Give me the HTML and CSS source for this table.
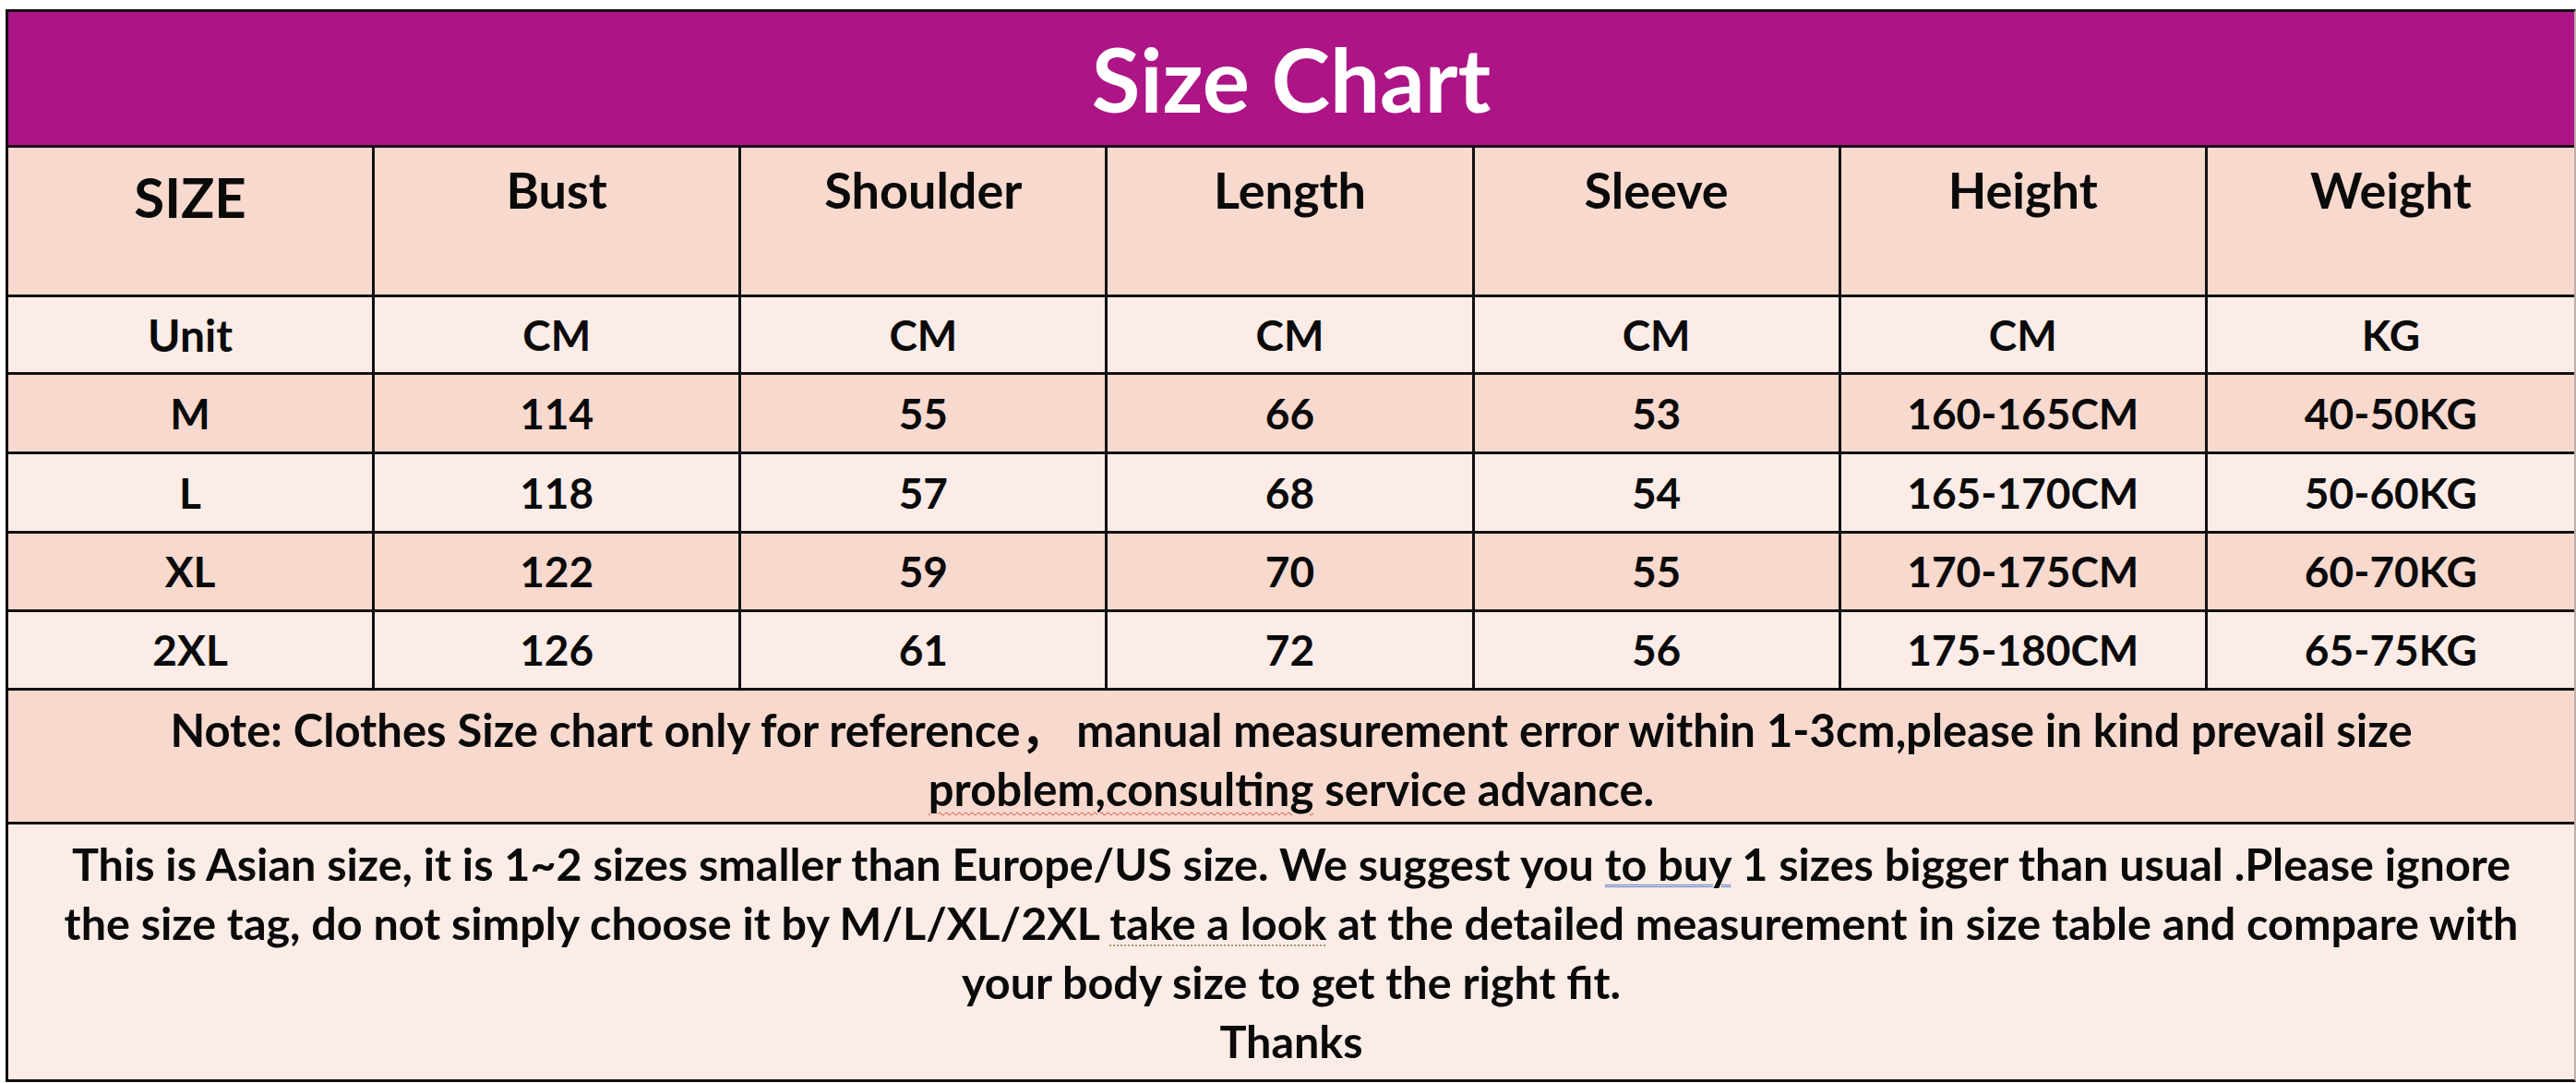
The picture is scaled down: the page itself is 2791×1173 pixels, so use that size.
FILE: index.html
```html
<!DOCTYPE html>
<html lang="en">
<head>
<meta charset="utf-8">
<title>Size Chart</title>
<link rel="stylesheet" href="styles.css">
</head>
<body>
<div class="chart">
  <div class="title">Size Chart</div>
  <div class="grid">
    <div class="cell head peach size">SIZE</div>
    <div class="cell head peach">Bust</div>
    <div class="cell head peach">Shoulder</div>
    <div class="cell head peach">Length</div>
    <div class="cell head peach">Sleeve</div>
    <div class="cell head peach">Height</div>
    <div class="cell head peach last">Weight</div>

    <div class="cell light label">Unit</div>
    <div class="cell light">CM</div>
    <div class="cell light">CM</div>
    <div class="cell light">CM</div>
    <div class="cell light">CM</div>
    <div class="cell light">CM</div>
    <div class="cell light last">KG</div>

    <div class="cell peach">M</div>
    <div class="cell peach">114</div>
    <div class="cell peach">55</div>
    <div class="cell peach">66</div>
    <div class="cell peach">53</div>
    <div class="cell peach">160-165CM</div>
    <div class="cell peach last">40-50KG</div>

    <div class="cell light">L</div>
    <div class="cell light">118</div>
    <div class="cell light">57</div>
    <div class="cell light">68</div>
    <div class="cell light">54</div>
    <div class="cell light">165-170CM</div>
    <div class="cell light last">50-60KG</div>

    <div class="cell peach">XL</div>
    <div class="cell peach">122</div>
    <div class="cell peach">59</div>
    <div class="cell peach">70</div>
    <div class="cell peach">55</div>
    <div class="cell peach">170-175CM</div>
    <div class="cell peach last">60-70KG</div>

    <div class="cell light">2XL</div>
    <div class="cell light">126</div>
    <div class="cell light">61</div>
    <div class="cell light">72</div>
    <div class="cell light">56</div>
    <div class="cell light">175-180CM</div>
    <div class="cell light last">65-75KG</div>
  </div>
  <div class="note">
    <span class="line">Note: Clothes Size chart only for reference， manual measurement error within 1-3cm,please in kind prevail size</span>
    <span class="line"><span class="spell">problem,consulting</span> service advance.</span>
  </div>
  <div class="para">
    <span class="line">This is Asian size, it is 1~2 sizes smaller than Europe/US size. We suggest you <span class="grammar">to buy</span> 1 sizes bigger than usual .Please ignore</span>
    <span class="line">the size tag, do not simply choose it by M/L/XL/2XL <span class="dotted">take a look</span> at the detailed measurement in size table and compare with</span>
    <span class="line">your body size to get the right fit.</span>
    <span class="line">Thanks</span>
  </div>
</div>
</body>
</html>
```

FILE: styles.css
```css
html, body {
  margin: 0;
  padding: 0;
  background: #ffffff;
  overflow: hidden;
}

body {
  font-family: "Lato", "Noto Sans CJK SC", sans-serif;
  font-weight: 700;
  color: #0a0a0a;
}

.chart {
  box-sizing: border-box;
  width: calc(100% - 6px);
  margin: 10px 0 0 6px;
  border: 3px solid #150b12;
  border-right: 2px solid #bfaeaa;
  display: flex;
  flex-direction: column;
}

.title {
  box-sizing: border-box;
  height: 147px;
  border-bottom: 3px solid #1f0a18;
  background: #ad1587;
  color: #ffffff;
  font-size: 96px;
  display: flex;
  align-items: center;
  justify-content: center;
  padding-bottom: 2px;
}

.grid {
  display: grid;
  grid-template-columns: repeat(7, 1fr);
  grid-template-rows: 162px 84px 86px 86px 85px 85px;
}

.cell {
  box-sizing: border-box;
  border-right: 3px solid #111111;
  border-bottom: 3px solid #111111;
  display: flex;
  align-items: center;
  justify-content: center;
  font-size: 46px;
  line-height: 1.2;
}

.cell.last {
  border-right: none;
}

.cell.label {
  font-size: 48px;
}

.cell.head {
  align-items: flex-start;
  padding-top: 14px;
  font-size: 54px;
}

.cell.head.size {
  padding-top: 17px;
  font-size: 60px;
}

.peach {
  background: #f8d9ce;
}

.light {
  background: #fbece7;
}

.note {
  box-sizing: border-box;
  height: 145px;
  border-bottom: 3px solid #111111;
  background: #f8d9ce;
  padding-top: 10px;
  font-size: 49px;
  line-height: 64px;
  text-align: center;
  display: flex;
  flex-direction: column;
  align-items: center;
}

.para {
  box-sizing: border-box;
  height: 276px;
  background: #fbece7;
  padding-top: 10px;
  font-size: 48.5px;
  line-height: 64px;
  text-align: center;
  display: flex;
  flex-direction: column;
  align-items: center;
}

.line {
  display: block;
  white-space: nowrap;
}

.spell {
  text-decoration: underline wavy #c8463c;
  text-decoration-thickness: 1px;
  text-underline-offset: 6px;
}

.grammar {
  text-decoration: underline double #5f82c6;
  text-decoration-thickness: 1px;
  text-underline-offset: 4px;
}

.dotted {
  text-decoration: underline dotted #a5976a;
  text-decoration-thickness: 2px;
  text-underline-offset: 5px;
}
```
